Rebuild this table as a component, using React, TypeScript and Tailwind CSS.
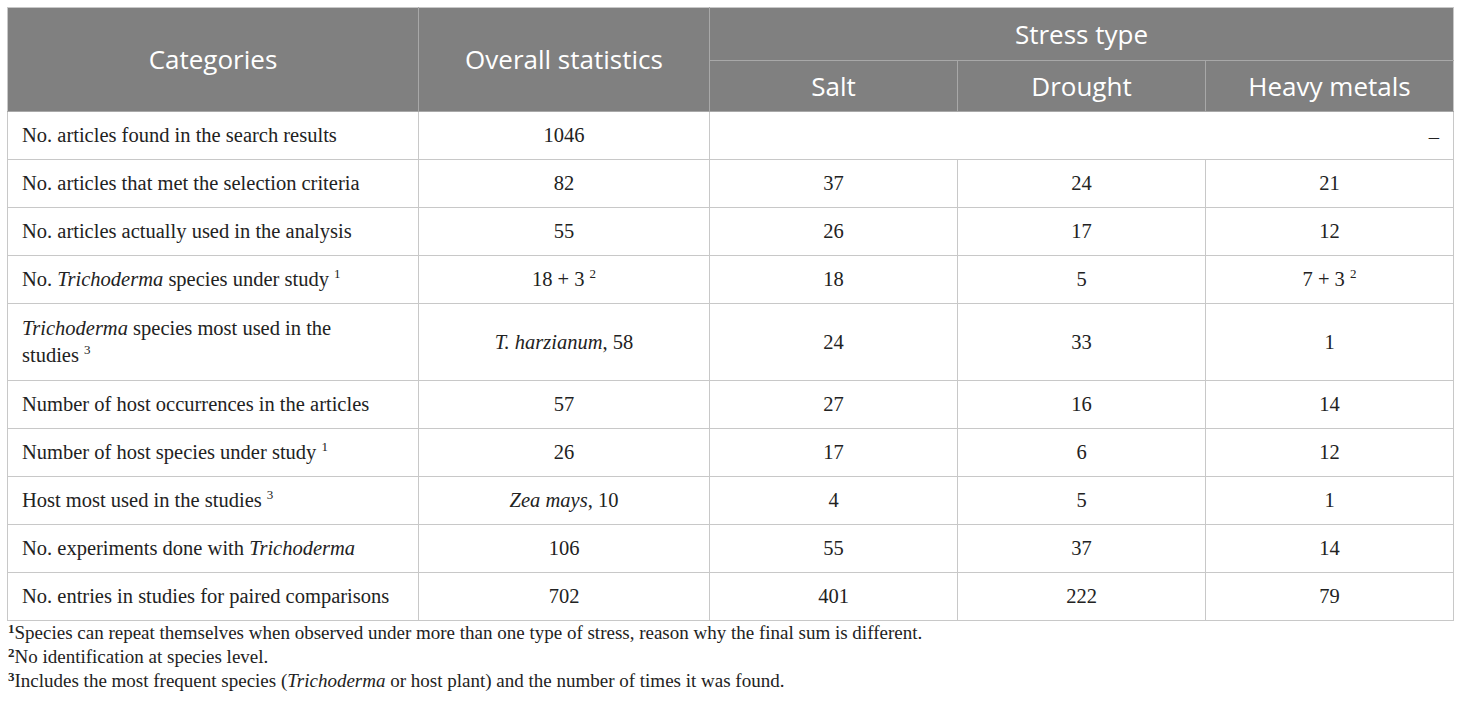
import React from "react";

type Row = { label: React.ReactNode; overall: React.ReactNode; salt?: React.ReactNode; drought?: React.ReactNode; heavy?: React.ReactNode; dash?: boolean; tall?: boolean };

const Sup = ({ n }: { n: string }) => <sup className="text-[13px] relative top-[-8px] leading-none align-baseline">{n}</sup>;

const rows: Row[] = [
  { label: "No. articles found in the search results", overall: "1046", dash: true },
  { label: "No. articles that met the selection criteria", overall: "82", salt: "37", drought: "24", heavy: "21" },
  { label: "No. articles actually used in the analysis", overall: "55", salt: "26", drought: "17", heavy: "12" },
  {
    label: (<>No. <i>Trichoderma</i> species under study <Sup n="1" /></>),
    overall: (<>18 + 3 <Sup n="2" /></>),
    salt: "18", drought: "5",
    heavy: (<>7 + 3 <Sup n="2" /></>),
  },
  {
    label: (<><i>Trichoderma</i> species most used in the<br />studies <Sup n="3" /></>),
    overall: (<><i>T. harzianum</i>, 58</>),
    salt: "24", drought: "33", heavy: "1", tall: true,
  },
  { label: "Number of host occurrences in the articles", overall: "57", salt: "27", drought: "16", heavy: "14" },
  { label: (<>Number of host species under study <Sup n="1" /></>), overall: "26", salt: "17", drought: "6", heavy: "12" },
  { label: (<>Host most used in the studies <Sup n="3" /></>), overall: (<><i>Zea mays</i>, 10</>), salt: "4", drought: "5", heavy: "1" },
  { label: (<>No. experiments done with <i>Trichoderma</i></>), overall: "106", salt: "55", drought: "37", heavy: "14" },
  { label: "No. entries in studies for paired comparisons", overall: "702", salt: "401", drought: "222", heavy: "79" },
];

export default function App() {
  const td = "border border-[#c8c8c8] px-[14px] text-[20.5px] text-[#222]";
  const th = "border border-[#a8a8a8] font-normal text-white text-[26px]";
  const sansStyle = { fontFamily: '"Open Sans", "Noto Sans", sans-serif' };
  return (
    <div
      className="w-[1460px] h-[709px] bg-white pt-[7px] pl-[7px]"
      style={{ fontFamily: '"Liberation Serif", "Times New Roman", serif' }}
    >
      <table className="border-collapse table-fixed w-[1446px]">
        <colgroup>
          <col className="w-[411px]" />
          <col className="w-[291px]" />
          <col className="w-[248px]" />
          <col className="w-[248px]" />
          <col className="w-[248px]" />
        </colgroup>
        <thead className="bg-[#808080]" style={sansStyle}>
          <tr className="h-[53px]">
            <th rowSpan={2} className={th + " border-l-[#c8c8c8] border-t-[#c8c8c8]"}>Categories</th>
            <th rowSpan={2} className={th + " border-t-[#c8c8c8]"}>Overall statistics</th>
            <th colSpan={3} className={th + " border-t-[#c8c8c8] border-r-[#c8c8c8]"}>Stress type</th>
          </tr>
          <tr className="h-[51px]">
            <th className={th}>Salt</th>
            <th className={th}>Drought</th>
            <th className={th + " border-r-[#c8c8c8]"}>Heavy metals</th>
          </tr>
        </thead>
        <tbody>
          {rows.map((r, i) => (
            <tr key={i} className={r.tall ? "h-[77px]" : "h-[48px]"}>
              <td className={td + " text-left leading-[27px]"}>{r.label}</td>
              <td className={td + " text-center"}>{r.overall}</td>
              {r.dash ? (
                <td colSpan={3} className={td + " text-right pr-[14px] pt-[4px]"}>–</td>
              ) : (
                <>
                  <td className={td + " text-center"}>{r.salt}</td>
                  <td className={td + " text-center"}>{r.drought}</td>
                  <td className={td + " text-center"}>{r.heavy}</td>
                </>
              )}
            </tr>
          ))}
        </tbody>
      </table>
      <div className="text-[19px] text-[#222] leading-[24px] pl-[1px]">
        <p><sup className="text-[13px] font-bold">1</sup>Species can repeat themselves when observed under more than one type of stress, reason why the final sum is different.</p>
        <p><sup className="text-[13px] font-bold">2</sup>No identification at species level.</p>
        <p><sup className="text-[13px] font-bold">3</sup>Includes the most frequent species (<i>Trichoderma</i> or host plant) and the number of times it was found.</p>
      </div>
    </div>
  );
}
